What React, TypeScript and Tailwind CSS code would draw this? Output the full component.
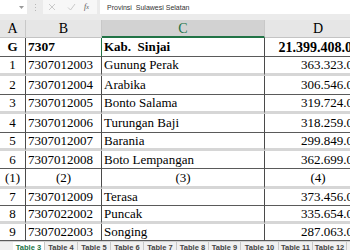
import React from "react";

type Row = {
  a: string;
  b: string;
  c: string;
  d: string;
  h: string;
  line: "dark" | "gray";
  bold?: boolean;
  center?: boolean;
};

const rows: Row[] = [
  { a: "G", b: "7307", c: "Kab.  Sinjai", d: "21.399.408.000", h: "h-[19px]", line: "dark", bold: true },
  { a: "1", b: "7307012003", c: "Gunung Perak", d: "363.323.000", h: "h-[19px]", line: "gray" },
  { a: "2", b: "7307012004", c: "Arabika", d: "306.546.000", h: "h-[19px]", line: "dark" },
  { a: "3", b: "7307012005", c: "Bonto Salama", d: "319.724.000", h: "h-[19px]", line: "gray" },
  { a: "4", b: "7307012006", c: "Turungan Baji", d: "318.259.000", h: "h-[19px]", line: "dark" },
  { a: "5", b: "7307012007", c: "Barania", d: "299.849.000", h: "h-[18px]", line: "gray" },
  { a: "6", b: "7307012008", c: "Boto Lempangan", d: "362.699.000", h: "h-[18px]", line: "dark" },
  { a: "(1)", b: "(2)", c: "(3)", d: "(4)", h: "h-[20px]", line: "gray", center: true },
  { a: "7", b: "7307012009", c: "Terasa", d: "373.456.000", h: "h-[17px]", line: "dark" },
  { a: "8", b: "7307022002", c: "Puncak", d: "335.654.000", h: "h-[18px]", line: "gray" },
  { a: "9", b: "7307022003", c: "Songing", d: "287.063.000", h: "h-[17px]", line: "dark" },
];

const tabs = [
  { t: "Table 4", w: "w-[33px]" },
  { t: "Table 5", w: "w-[33px]" },
  { t: "Table 6", w: "w-[33px]" },
  { t: "Table 7", w: "w-[33px]" },
  { t: "Table 8", w: "w-[32px]" },
  { t: "Table 9", w: "w-[32px]" },
  { t: "Table 10", w: "w-[38px]" },
  { t: "Table 11", w: "w-[34px]" },
  { t: "Table 12", w: "w-[34px]" },
];

function DataRow({ r, first }: { r: Row; first: boolean }) {
  const lineCls =
    r.line === "gray" ? "border-b-[3px] border-b-[#d6d6d6]" : "border-b border-b-[#5a5a5a]";
  const weight = r.bold ? "font-bold" : "font-normal";
  return (
    <div className={`flex shrink-0 ${r.h} text-[13px] text-black ${weight}`}>
      <div className={`w-[26px] shrink-0 flex items-center justify-center border-r border-r-[#4a4a4a] ${lineCls}`}>
        {r.a}
      </div>
      <div
        className={`w-[76px] shrink-0 flex items-center border-r ${
          first ? "border-r-[#217346]" : "border-r-[#4a4a4a]"
        } ${lineCls} ${r.center ? "justify-center" : "pl-[2px]"} ${r.bold ? "text-[13.5px]" : ""}`}
      >
        {r.b}
      </div>
      <div
        className={`w-[163px] shrink-0 flex items-center border-r border-r-[#4a4a4a] ${lineCls} ${
          r.center ? "justify-center" : "pl-[2px]"
        } whitespace-pre`}
      >
        {r.c}
      </div>
      <div
        className={`w-[106px] shrink-0 flex items-center whitespace-nowrap ${lineCls} ${
          r.center ? "justify-center" : "justify-end pr-[5px]"
        } ${r.bold ? "text-[14px]" : ""}`}
      >
        {r.d}
      </div>
    </div>
  );
}

export default function App() {
  return (
    <div className="w-[350px] h-[250px] overflow-hidden bg-white flex flex-col font-['Liberation_Serif',serif]">
      {/* Formula bar */}
      <div className="h-[20px] shrink-0 bg-[#ebebeb] flex items-start">
        <div className="w-[27px] h-[14px] bg-white flex items-center justify-end pr-[3px]">
          <svg width="5" height="3" viewBox="0 0 5 3">
            <path d="M0 0 L5 0 L2.5 3 Z" fill="#9a9a9a" />
          </svg>
        </div>
        <div className="w-[16px] h-[14px] flex flex-col items-center justify-center gap-[2px]">
          <div className="w-[1px] h-[1px] bg-[#b8b8b8]" />
          <div className="w-[1px] h-[1px] bg-[#b8b8b8]" />
          <div className="w-[1px] h-[1px] bg-[#b8b8b8]" />
        </div>
        <div className="w-[54px] h-[14px] bg-[#f7f7f7] flex items-center">
          <svg width="8" height="8" viewBox="0 0 8 8" className="ml-[5px]">
            <path d="M1 1 L7 7 M7 1 L1 7" stroke="#c4c4c4" strokeWidth="0.9" fill="none" />
          </svg>
          <svg width="9" height="8" viewBox="0 0 9 8" className="ml-[11px]">
            <path d="M1 4.5 L3.5 7 L8 1" stroke="#c4c4c4" strokeWidth="0.9" fill="none" />
          </svg>
          <span className="ml-[8px] text-[8px] italic text-[#555] font-['Liberation_Serif',serif] leading-none">
            f<span className="text-[6px]">x</span>
          </span>
        </div>
        <div className="w-[3px]" />
        <div className="flex-1 h-[14px] bg-white flex items-center pl-[7px]">
          <span className="text-[7px] text-[#333] font-['Liberation_Sans',sans-serif] whitespace-pre leading-none">
            Provinsi  Sulawesi Selatan
          </span>
        </div>
      </div>

      {/* Column headers */}
      <div className="h-[18px] shrink-0 flex bg-[#e6e6e6] text-[14px] text-black">
        <div className="w-[26px] shrink-0 flex items-center justify-center border-r border-r-[#c8c8c8] border-b border-b-[#c4c4c4]">
          A
        </div>
        <div className="w-[76px] shrink-0 flex items-center justify-center border-r border-r-[#c8c8c8] border-b border-b-[#c4c4c4]">
          B
        </div>
        <div className="w-[163px] shrink-0 flex items-center justify-center bg-[#d2d2d2] text-[#217346] border-r border-r-[#c8c8c8] border-b-2 border-b-[#217346]">
          C
        </div>
        <div className="w-[106px] shrink-0 flex items-center justify-center border-b border-b-[#c4c4c4]">
          D
        </div>
      </div>

      {/* Data rows */}
      {rows.map((r, i) => (
        <DataRow key={i} r={r} first={i === 0} />
      ))}

      {/* Sheet tabs */}
      <div className="h-[20px] shrink-0 bg-[#f0f0f0] border-t border-t-[#d0d0d0] flex items-start font-['Liberation_Sans',sans-serif] text-[7.5px] font-bold leading-none">
        <div className="w-[13px] shrink-0 pt-[5px] text-center text-[#777]">...</div>
        <div className="w-[32px] shrink-0 bg-white h-[14px] text-[#217346] pt-[2px] text-center border-r border-r-[#c8c8c8]">
          Table 3
        </div>
        {tabs.map((t) => (
          <div
            key={t.t}
            className={`${t.w} shrink-0 pt-[2px] text-center text-[#444] border-r border-r-[#c8c8c8] h-[14px]`}
          >
            {t.t}
          </div>
        ))}
      </div>
    </div>
  );
}
